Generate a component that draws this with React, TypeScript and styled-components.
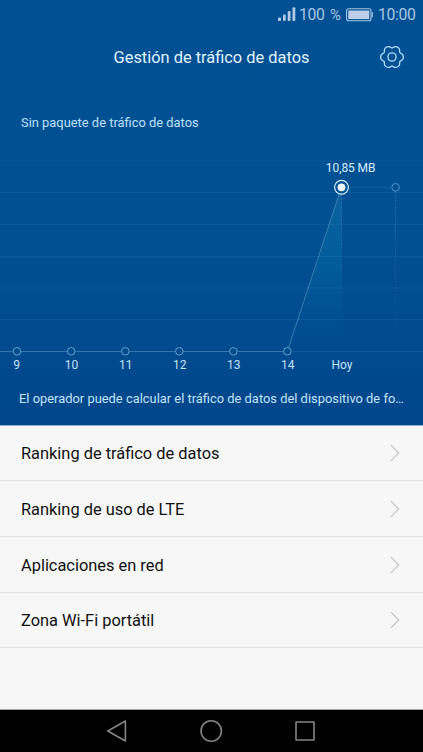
import React from 'react';
import styled, { createGlobalStyle } from 'styled-components';

const GlobalStyle = createGlobalStyle`
  * { box-sizing: border-box; }
  body { margin: 0; background: #f7f7f7; font-family: Roboto, sans-serif; }
`;

const Screen = styled.main`
  width: 423px;
  height: 752px;
  display: flex;
  flex-direction: column;
  overflow: hidden;
  background: #f7f7f7;
`;

const Hero = styled.section`
  height: 426px;
  flex: none;
  display: flex;
  flex-direction: column;
  background: linear-gradient(#005093 0, #005092 240px, #00468b 425px);
  border-bottom: 1px solid #8eb5da;
`;

const StatusBar = styled.div`
  height: 30px;
  display: flex;
  justify-content: flex-end;
  align-items: center;
  padding-right: 7px;
  color: #a9c6e4;
  line-height: 30px;
  svg { flex: none; }
`;

const StatusText = styled.span<{ $width: number; $gap: number; $size?: number }>`
  width: ${(p) => p.$width}px;
  margin-left: ${(p) => p.$gap}px;
  font-size: ${(p) => p.$size ?? 15.8}px;
  letter-spacing: -0.35px;
  white-space: nowrap;
`;

const TitleBar = styled.header`
  height: 54px;
  display: grid;
  grid-template-columns: 40px 1fr 40px;
  align-items: center;
`;

const Title = styled.h1`
  grid-column: 2;
  margin: 0;
  padding-top: 1px;
  color: #e2f3ff;
  font-size: 16.4px;
  font-weight: 400;
  line-height: 54px;
  text-align: center;
`;

const SettingsButton = styled.button`
  width: 26px;
  height: 26px;
  margin: -1px 0 0 -4px;
  padding: 0;
  border: 0;
  background: none;
  svg { display: block; }
`;

const PlanLabel = styled.div`
  height: 66px;
  padding: 28px 21px 0;
  color: #bfe0fa;
  font-size: 12.9px;
  line-height: 22px;
`;

const Chart = styled.svg`
  display: block;
  flex: none;
  font-family: Roboto, sans-serif;
`;

const Notice = styled.p`
  margin: 0;
  padding: 7px 18px 0 19px;
  color: #c5e3fb;
  font-size: 12.9px;
  line-height: 24px;
  white-space: nowrap;
`;

const List = styled.ul`
  margin: 0;
  padding: 0;
  list-style: none;
  flex: 1;
`;

const Row = styled.li<{ $height: number }>`
  height: ${(p) => p.$height}px;
  display: flex;
  align-items: center;
  justify-content: space-between;
  padding: 0 23px 0 21px;
  border-bottom: 1px solid #e2e2e2;
  color: #101010;
  font-size: 16.4px;
`;

const RowLabel = styled.span`
  padding-top: 1px;
`;

const NavBar = styled.nav`
  height: 43px;
  flex: none;
  display: flex;
  justify-content: center;
  gap: 70px;
  padding: 9px 1px 0 0;
  background: #000;
  border-top: 1px solid #a8a8a8;
`;

const gearPath =
  Array.from({ length: 144 }, (_, i) => {
    const a = (i * Math.PI) / 72;
    const r = 10.4 + 1.1 * Math.cos(6 * a) - 0.22 * Math.cos(12 * a);
    return `${i ? 'L' : 'M'}${(13 + r * Math.cos(a)).toFixed(2)} ${(13 + r * Math.sin(a)).toFixed(2)}`;
  }).join('') + 'Z';

const days = [
  { label: '9', x: 17 },
  { label: '10', x: 71.2 },
  { label: '11', x: 125.3 },
  { label: '12', x: 179.3 },
  { label: '13', x: 233.4 },
  { label: '14', x: 287.4 },
];
const gridLines = [11, 42.5, 74.5, 106.5, 138, 169.5];

const rows = [
  { label: 'Ranking de tráfico de datos', height: 55 },
  { label: 'Ranking de uso de LTE', height: 56 },
  { label: 'Aplicaciones en red', height: 56 },
  { label: 'Zona Wi-Fi portátil', height: 55 },
];

function UsageChart() {
  return (
    <Chart width="423" height="230" viewBox="0 0 423 230">
      <defs>
        <linearGradient id="area" x1="0" y1="0" x2="0" y2="1">
          <stop offset="0" stopColor="#1a75ac" stopOpacity=".5" />
          <stop offset=".5" stopColor="#006ca4" stopOpacity=".42" />
          <stop offset="1" stopColor="#005c99" stopOpacity="0" />
        </linearGradient>
        <linearGradient id="fade" gradientUnits="userSpaceOnUse" x1="0" y1="42" x2="0" y2="190">
          <stop offset="0" stopColor="#73acd3" stopOpacity=".3" />
          <stop offset="1" stopColor="#73acd3" stopOpacity="0" />
        </linearGradient>
      </defs>
      <path d="M288 201.5L341.5 38V201.5Z" fill="url(#area)" />
      {gridLines.map((y) => (
        <path key={y} d={`M0 ${y}H423`} stroke="#3f8fc4" strokeOpacity=".18" />
      ))}
      <path d="M291 201.5H423" stroke="#175f9c" strokeOpacity=".7" />
      <path d="M288.6 197.5L339.2 44" fill="none" stroke="#4a8db9" strokeWidth=".8" />
      <path d="M341.5 45V201M395.5 41V190" stroke="url(#fade)" strokeDasharray="2 1" />
      <path d="M349 37.5H391" stroke="#105b9a" />
      <path d="M0 201.5H283" stroke="#3975ab" />
      {days.map((d) => (
        <g key={d.label}>
          <circle cx={d.x} cy="201.3" r="3.8" fill="#004b8e" stroke="#75a9d0" strokeWidth=".9" />
          <text x={d.label === '9' ? 16.5 : d.x + 0.4} y="218.8" fontSize="12" fill="#c5e3fb" textAnchor="middle">
            {d.label}
          </text>
        </g>
      ))}
      <text x="342" y="218.8" fontSize="12" fill="#c5e3fb" textAnchor="middle">Hoy</text>
      <text x="350.6" y="22" fontSize="12" letterSpacing="-.1" fill="#d5edff" textAnchor="middle">10,85 MB</text>
      <circle cx="395.6" cy="37.3" r="3.8" fill="#005092" stroke="#5d9acb" strokeWidth=".9" />
      <circle cx="341.5" cy="37.3" r="6.9" fill="#005092" stroke="#e2f4ff" strokeWidth="1.2" />
      <circle cx="341.5" cy="37.3" r="3.9" fill="#eef9ff" />
    </Chart>
  );
}

export default function App() {
  return (
    <Screen>
      <GlobalStyle />
      <Hero>
        <StatusBar>
          <svg width="18" height="16" viewBox="0 0 18 16" fill="#b4cbe7">
            <rect x="0" y="10.5" width="3" height="3.5" rx="1" />
            <rect x="5" y="7.5" width="2.7" height="6.5" rx="1" />
            <rect x="9.7" y="4" width="2.8" height="10" rx="1" />
            <rect x="14.5" y=".2" width="2.8" height="13.8" rx="1" />
          </svg>
          <StatusText $width={31} $gap={3}>100</StatusText>
          <StatusText $width={16} $gap={0} $size={15}>%</StatusText>
          <svg width="27" height="14" viewBox="0 0 27 14">
            <rect x=".6" y=".8" width="24.4" height="12" rx="2" fill="none" stroke="#a5c4e3" strokeWidth="1.1" />
            <rect x="2.3" y="2.5" width="21" height="8.6" fill="#becde8" />
            <path d="M26.2 4V9.5" stroke="#a5c4e3" strokeWidth="1.2" />
          </svg>
          <StatusText $width={38} $gap={5}>10:00</StatusText>
        </StatusBar>
        <TitleBar>
          <Title>Gestión de tráfico de datos</Title>
          <SettingsButton aria-label="Ajustes">
            <svg width="26" height="26" viewBox="0 0 26 26" fill="none" stroke="#b4dafb" strokeWidth="1.35">
              <path d={gearPath} />
              <circle cx="13" cy="13" r="4.1" />
            </svg>
          </SettingsButton>
        </TitleBar>
        <PlanLabel>Sin paquete de tráfico de datos</PlanLabel>
        <UsageChart />
        <Notice>El operador puede calcular el tráfico de datos del dispositivo de fo…</Notice>
      </Hero>
      <List>
        {rows.map((r) => (
          <Row key={r.label} $height={r.height}>
            <RowLabel>{r.label}</RowLabel>
            <svg width="10" height="18" viewBox="0 0 10 18" fill="none" stroke="#c0c0c0" strokeWidth="1.1">
              <path d="M1 1.2L8.7 9L1 16.8" />
            </svg>
          </Row>
        ))}
      </List>
      <NavBar>
        <svg width="24" height="24" viewBox="0 0 24 24" fill="none" stroke="#858585" strokeWidth="1.6" strokeLinejoin="round">
          <path d="M20.4 2V22L2.8 12Z" />
        </svg>
        <svg width="24" height="24" viewBox="0 0 24 24" fill="none" stroke="#858585" strokeWidth="1.6">
          <circle cx="12.2" cy="12" r="10.2" />
        </svg>
        <svg width="24" height="24" viewBox="0 0 24 24" fill="none" stroke="#858585" strokeWidth="1.6" strokeLinejoin="round">
          <path d="M3 3H21V21H3Z" />
        </svg>
      </NavBar>
    </Screen>
  );
}
